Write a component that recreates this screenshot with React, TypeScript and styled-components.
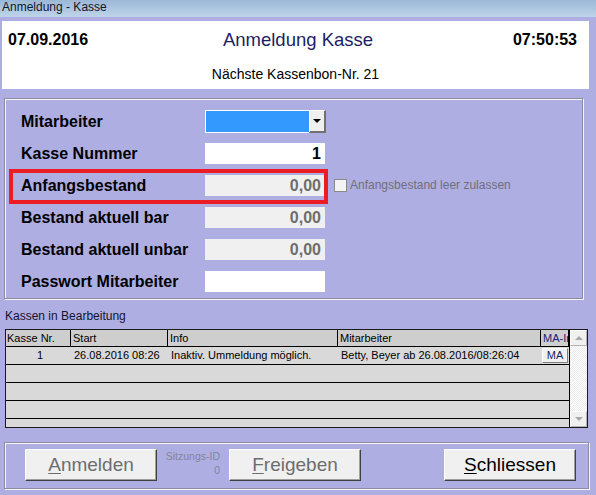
import React from "react";
import styled, { createGlobalStyle } from "styled-components";

const Global = createGlobalStyle`
  html, body { margin: 0; padding: 0; }
  body {
    width: 596px;
    height: 495px;
    overflow: hidden;
    background: #afaee2;
    font-family: "Liberation Sans", Arial, sans-serif;
  }
`;

const Window = styled.div`
  width: 596px;
  height: 495px;
  display: flex;
  flex-direction: column;
  background: #afaee2;
`;

const TitleBar = styled.div`
  height: 17px;
  background: linear-gradient(#9cb7d6, #bdd4ea);
  font-size: 12px;
  line-height: 15px;
  color: #15152a;
  padding-left: 2px;
`;

const Body = styled.div`
  display: flex;
  flex-direction: column;
  padding: 4px 7px 0 2px;
`;

const Header = styled.div`
  background: #fff;
  height: 68px;
  display: grid;
  grid-template-columns: 1fr auto 1fr;
  grid-template-rows: 38px 30px;
  align-items: center;
`;

const DateText = styled.div<{ $right?: boolean }>`
  font-size: 16px;
  font-weight: bold;
  color: #000;
  padding: ${(p) => (p.$right ? "0 12px 0 0" : "0 0 0 6px")};
  text-align: ${(p) => (p.$right ? "right" : "left")};
`;

const HeaderTitle = styled.div`
  font-size: 18.5px;
  color: #1d1d66;
  padding-left: 5px;
`;

const SubTitle = styled.div`
  grid-column: 1 / -1;
  text-align: center;
  font-size: 14px;
  color: #000;
`;

const GroupBox = styled.div<{ $mr: number; $mt: number }>`
  margin: ${(p) => p.$mt}px ${(p) => p.$mr}px 0 2px;
  border: 1px solid #8c8ca0;
  box-shadow: inset 1px 1px 0 #f4f4fa, 1px 1px 0 #f4f4fa;
`;

const Form = styled.div`
  display: flex;
  flex-direction: column;
  padding: 6px 0 1px 16px;
`;

const FormRow = styled.div`
  position: relative;
  display: grid;
  grid-template-columns: 184px 121px auto;
  height: 32px;
  align-items: center;
`;

const Label = styled.div`
  font-size: 16px;
  font-weight: bold;
  color: #000;
  padding-top: 1px;
`;

const Field = styled.div<{ $disabled?: boolean }>`
  width: 120px;
  height: 21px;
  box-sizing: border-box;
  background: ${(p) => (p.$disabled ? "#f0f0f0" : "#fff")};
  color: ${(p) => (p.$disabled ? "#6d6d6d" : "#000")};
  font-size: 16px;
  font-weight: bold;
  text-align: right;
  padding-right: 4px;
  line-height: 21px;
`;

const Select = styled.div`
  display: flex;
  width: 121px;
  height: 23px;
`;

const SelectValue = styled.div`
  flex: 1;
  background: #3399ff;
  border: 1px solid #fff;
  border-right: none;
`;

const SelectButton = styled.div`
  width: 17px;
  box-sizing: border-box;
  background: #f0f0f0;
  border-top: 1px solid #fff;
  border-left: 1px solid #fff;
  border-right: 2px solid #707070;
  border-bottom: 2px solid #707070;
  display: flex;
  align-items: center;
  justify-content: center;
`;

const Arrow = styled.div<{ $up?: boolean; $color?: string }>`
  width: 0;
  height: 0;
  border-left: 4px solid transparent;
  border-right: 4px solid transparent;
  ${(p) =>
    p.$up
      ? `border-bottom: 4px solid ${p.$color || "#000"};`
      : `border-top: 4px solid ${p.$color || "#000"};`}
`;

const CheckWrap = styled.div`
  display: flex;
  align-items: center;
  gap: 3px;
  margin-left: 8px;
  font-size: 12px;
  color: #6f6f7a;
`;

const CheckBox = styled.div`
  width: 13px;
  height: 13px;
  box-sizing: border-box;
  border: 1px solid #8a8a8a;
  background: #f4f4f4;
`;

const Highlight = styled.div`
  position: absolute;
  left: -12px;
  top: 0;
  width: 319px;
  height: 35px;
  box-sizing: border-box;
  border: 4px solid #ec1c24;
  pointer-events: none;
`;

const SectionLabel = styled.div`
  font-size: 12px;
  line-height: 14px;
  color: #14142e;
  padding: 10px 0 6px 3px;
`;

const Table = styled.div`
  margin-left: 3px;
  width: 583px;
  height: 99px;
  box-sizing: border-box;
  border: 1px solid #1a1a1a;
  display: grid;
  grid-template-columns: 1fr 18px;
  overflow: hidden;
`;

const TableMain = styled.div`
  display: flex;
  flex-direction: column;
  background: #d9d9d9;
  overflow: hidden;
`;

const cols = "65px 97px 170px 203px 28px";

const HeadRow = styled.div`
  display: grid;
  grid-template-columns: ${cols};
  height: 17px;
  flex-shrink: 0;
  box-sizing: border-box;
  border-bottom: 1px solid #000;
  background: #cecece;
`;

const HeadCell = styled.div<{ $color?: string }>`
  font-size: 11px;
  line-height: 16px;
  padding-left: 2px;
  border-right: 1px solid #000;
  white-space: nowrap;
  overflow: hidden;
  color: ${(p) => p.$color || "#000"};
  &:first-child { padding-left: 1px; }
`;

const DataRow = styled.div`
  display: grid;
  grid-template-columns: ${cols};
  height: 18px;
  flex-shrink: 0;
  box-sizing: border-box;
  border-bottom: 1px solid #000;
  align-items: center;
`;

const Cell = styled.div<{ $center?: boolean }>`
  font-size: 11px;
  line-height: 17px;
  padding-left: 3px;
  white-space: nowrap;
  overflow: hidden;
  text-align: ${(p) => (p.$center ? "center" : "left")};
`;

const SmallButton = styled.div`
  width: 26px;
  height: 15px;
  box-sizing: border-box;
  background: #f0f0f0;
  border: 1px solid;
  border-color: #fff #808080 #808080 #fff;
  font-size: 11px;
  line-height: 13px;
  text-align: center;
  color: #1d1d66;
  margin-left: 1px;
`;

const ScrollBar = styled.div`
  display: flex;
  flex-direction: column;
  justify-content: space-between;
  border-left: 1px solid #000;
  background: repeating-conic-gradient(#ffffff 0 25%, #ececec 0 50%) 0 0 / 2px 2px;
`;

const ScrollButton = styled.div`
  height: 16px;
  box-sizing: border-box;
  background: #f0f0f0;
  border: 1px solid;
  border-color: #fcfcfc #b4b4b4 #b4b4b4 #fcfcfc;
  display: flex;
  align-items: center;
  justify-content: center;
`;

const ButtonBar = styled.div`
  display: flex;
  align-items: flex-start;
  height: 45px;
  box-sizing: border-box;
  padding: 6px 12px 0 20px;
`;

const Button = styled.div<{ $disabled?: boolean }>`
  width: 132px;
  height: 32px;
  box-sizing: border-box;
  background: #f0f0f0;
  border: 1px solid;
  border-color: #fff #404040 #404040 #fff;
  box-shadow: inset -1px -1px 0 #a0a0a0;
  font-size: 19px;
  line-height: 29px;
  text-align: center;
  color: ${(p) => (p.$disabled ? "#6d6d6d" : "#000")};
  flex-shrink: 0;
  & u { text-decoration-thickness: 1px; text-underline-offset: 2px; }
`;

const Session = styled.div`
  width: 55px;
  margin: 0 9px 0 8px;
  font-size: 10.5px;
  line-height: 14px;
  color: #85859a;
  text-align: right;
`;

const Spacer = styled.div`
  flex: 1;
`;

const rows = [
  { nr: "1", start: "26.08.2016 08:26", info: "Inaktiv. Ummeldung möglich.", ma: "Betty, Beyer ab 26.08.2016/08:26:04", btn: true },
  null,
  null,
  null,
  null,
];

export default function App() {
  return (
    <>
      <Global />
      <Window>
        <TitleBar>Anmeldung - Kasse</TitleBar>
        <Body>
          <Header>
            <DateText>07.09.2016</DateText>
            <HeaderTitle>Anmeldung Kasse</HeaderTitle>
            <DateText $right>07:50:53</DateText>
            <SubTitle>Nächste Kassenbon-Nr. 21</SubTitle>
          </Header>

          <GroupBox $mt={9} $mr={6}>
            <Form>
              <FormRow>
                <Label>Mitarbeiter</Label>
                <Select>
                  <SelectValue />
                  <SelectButton>
                    <Arrow />
                  </SelectButton>
                </Select>
              </FormRow>
              <FormRow>
                <Label>Kasse Nummer</Label>
                <Field>1</Field>
              </FormRow>
              <FormRow>
                <Label>Anfangsbestand</Label>
                <Field $disabled>0,00</Field>
                <CheckWrap>
                  <CheckBox />
                  <span>Anfangsbestand leer zulassen</span>
                </CheckWrap>
                <Highlight />
              </FormRow>
              <FormRow>
                <Label>Bestand aktuell bar</Label>
                <Field $disabled>0,00</Field>
              </FormRow>
              <FormRow>
                <Label>Bestand aktuell unbar</Label>
                <Field $disabled>0,00</Field>
              </FormRow>
              <FormRow>
                <Label>Passwort Mitarbeiter</Label>
                <Field />
              </FormRow>
            </Form>
          </GroupBox>

          <SectionLabel>Kassen in Bearbeitung</SectionLabel>
          <Table>
            <TableMain>
              <HeadRow>
                <HeadCell>Kasse Nr.</HeadCell>
                <HeadCell>Start</HeadCell>
                <HeadCell>Info</HeadCell>
                <HeadCell>Mitarbeiter</HeadCell>
                <HeadCell $color="#20207a">MA-In</HeadCell>
              </HeadRow>
              {rows.map((r, i) => (
                <DataRow key={i}>
                  <Cell $center>{r?.nr}</Cell>
                  <Cell>{r?.start}</Cell>
                  <Cell>{r?.info}</Cell>
                  <Cell>{r?.ma}</Cell>
                  <div>{r?.btn && <SmallButton>MA</SmallButton>}</div>
                </DataRow>
              ))}
            </TableMain>
            <ScrollBar>
              <ScrollButton>
                <Arrow $up $color="#a8a8a8" />
              </ScrollButton>
              <ScrollButton>
                <Arrow $color="#a8a8a8" />
              </ScrollButton>
            </ScrollBar>
          </Table>

          <GroupBox $mt={14} $mr={0}>
            <ButtonBar>
              <Button $disabled>
                <u>A</u>nmelden
              </Button>
              <Session>
                <div>Sitzungs-ID</div>
                <div>0</div>
              </Session>
              <Button $disabled>
                <u>F</u>reigeben
              </Button>
              <Spacer />
              <Button>
                <u>S</u>chliessen
              </Button>
            </ButtonBar>
          </GroupBox>
        </Body>
      </Window>
    </>
  );
}
